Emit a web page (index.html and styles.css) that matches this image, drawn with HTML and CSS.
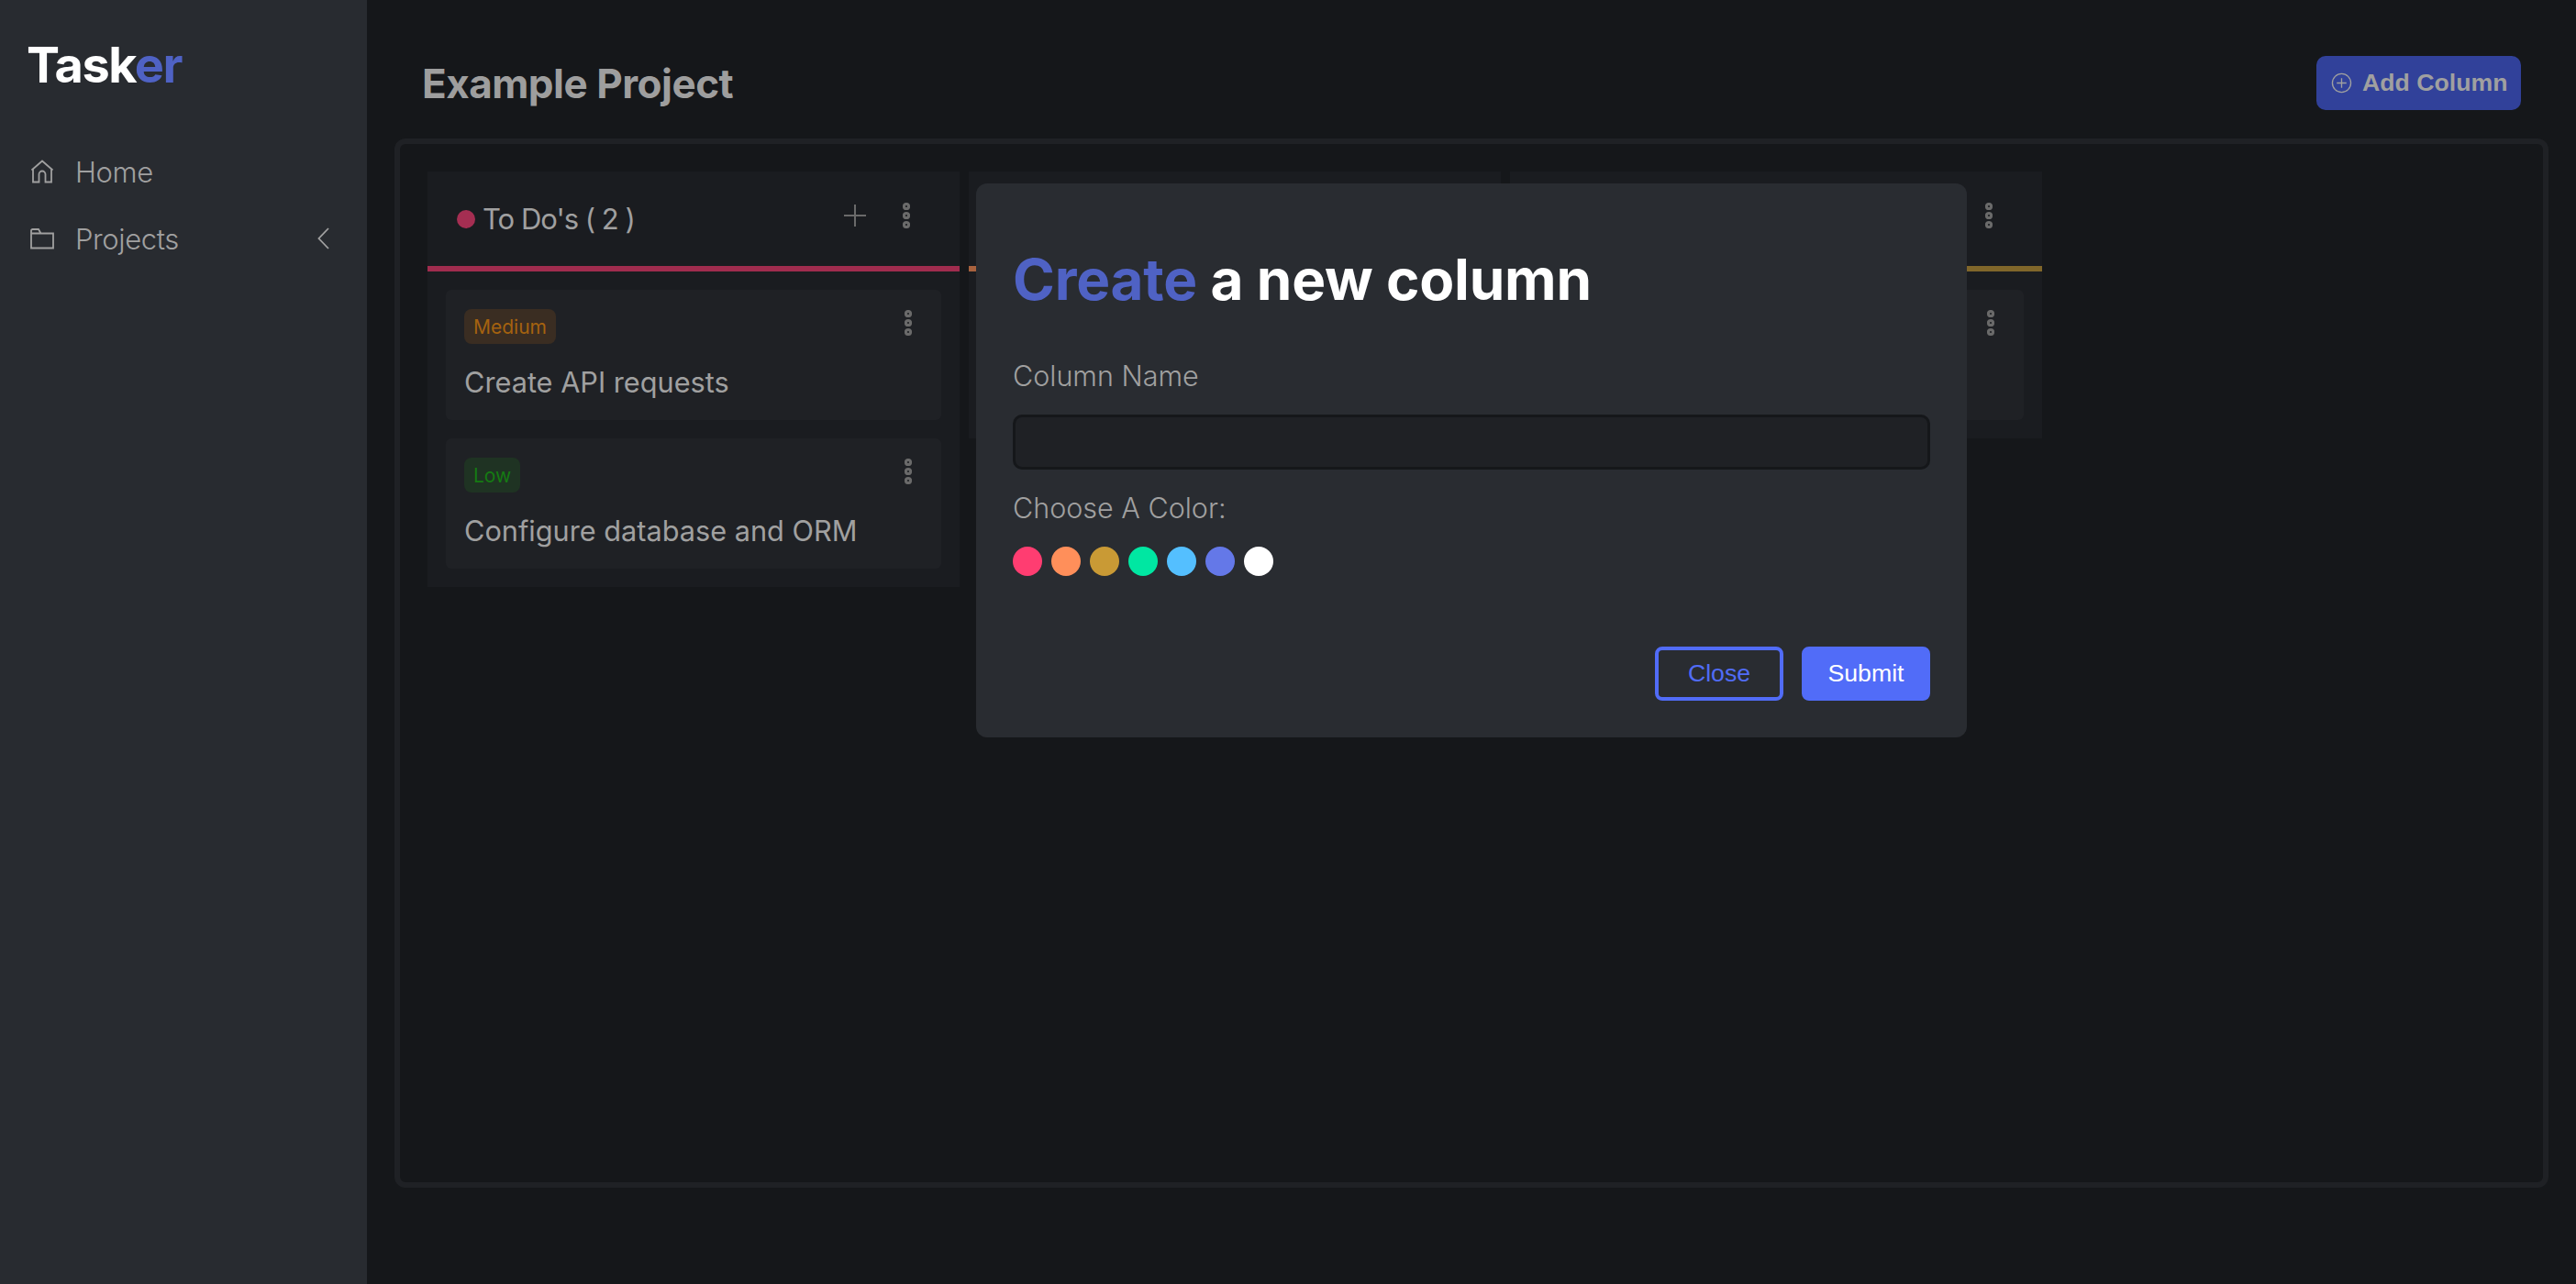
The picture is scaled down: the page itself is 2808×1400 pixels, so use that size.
FILE: index.html
```html
<!DOCTYPE html>
<html lang="en">
<head>
    <meta charset="UTF-8">
    <meta name="viewport" content="width=device-width, initial-scale=1.0">
    <title>Tasker</title>
    <link rel="stylesheet" href="styles.css">
</head>
<body>
    <aside class="sidebar">
        <h1 class="logo">Task<span class="accent">er</span></h1>
        <nav class="nav">
            <a class="nav-item">
                <svg class="nav-icon" viewBox="0 0 26 26"><path d="M1.5 11.5 13 1.5l11.5 10M3 10.5V24.5h6.5V16a3.5 3.5 0 0 1 7 0v8.5H23V10.5"/></svg>
                <span>Home</span>
            </a>
            <a class="nav-item">
                <svg class="nav-icon" viewBox="0 0 26 24"><path d="M1 3.5V22.5H25V6.5H11.5L9 2H2.5A1.5 1.5 0 0 0 1 3.5ZM1 6.5H11.5"/></svg>
                <span>Projects</span>
                <svg class="nav-arrow" viewBox="0 0 13 24"><path d="M12 1 1.5 12 12 23"/></svg>
            </a>
        </nav>
    </aside>

    <main class="main">
        <header class="topbar">
            <h2 class="project-title">Example Project</h2>
            <button class="add-btn">
                <svg class="add-icon" viewBox="0 0 24 24"><circle cx="12" cy="12" r="10.5"/><path d="M12 6.5v11M6.5 12h11"/></svg>
                Add Column
            </button>
        </header>

        <section class="board">
            <div class="column">
                <div class="column-head line-red">
                    <span class="column-dot"></span>
                    <span class="column-name">To Do's ( 2 )</span>
                    <div class="column-actions">
                        <svg class="plus" viewBox="0 0 24 24"><path d="M12 0v24M0 12h24"/></svg>
                        <svg class="dots" viewBox="0 0 8 28"><circle cx="4" cy="4" r="2.6"/><circle cx="4" cy="14" r="2.6"/><circle cx="4" cy="24" r="2.6"/></svg>
                    </div>
                </div>
                <div class="cards">
                    <article class="card">
                        <div class="card-head">
                            <span class="badge badge-medium">Medium</span>
                            <svg class="dots" viewBox="0 0 8 28"><circle cx="4" cy="4" r="2.6"/><circle cx="4" cy="14" r="2.6"/><circle cx="4" cy="24" r="2.6"/></svg>
                        </div>
                        <p class="card-title">Create API requests</p>
                    </article>
                    <article class="card">
                        <div class="card-head">
                            <span class="badge badge-low">Low</span>
                            <svg class="dots" viewBox="0 0 8 28"><circle cx="4" cy="4" r="2.6"/><circle cx="4" cy="14" r="2.6"/><circle cx="4" cy="24" r="2.6"/></svg>
                        </div>
                        <p class="card-title">Configure database and ORM</p>
                    </article>
                </div>
            </div>

            <div class="column">
                <div class="column-head line-orange"></div>
                <div class="cards">
                    <article class="card"></article>
                </div>
            </div>

            <div class="column">
                <div class="column-head line-yellow">
                    <div class="column-actions">
                        <svg class="dots" viewBox="0 0 8 28"><circle cx="4" cy="4" r="2.6"/><circle cx="4" cy="14" r="2.6"/><circle cx="4" cy="24" r="2.6"/></svg>
                    </div>
                </div>
                <div class="cards">
                    <article class="card">
                        <div class="card-head">
                            <span></span>
                            <svg class="dots" viewBox="0 0 8 28"><circle cx="4" cy="4" r="2.6"/><circle cx="4" cy="14" r="2.6"/><circle cx="4" cy="24" r="2.6"/></svg>
                        </div>
                    </article>
                </div>
            </div>
        </section>

        <form class="modal" onsubmit="event.preventDefault();">
            <h2 class="modal-title"><span class="accent">Create</span> a new column</h2>
            <label class="field-label" for="column-name">Column Name</label>
            <input class="field-input" type="text" id="column-name">
            <p class="field-label color-label">Choose A Color:</p>
            <div class="swatches">
                <span class="swatch swatch-pink"></span>
                <span class="swatch swatch-orange"></span>
                <span class="swatch swatch-gold"></span>
                <span class="swatch swatch-green"></span>
                <span class="swatch swatch-sky"></span>
                <span class="swatch swatch-blue"></span>
                <span class="swatch swatch-white"></span>
            </div>
            <div class="modal-actions">
                <button type="button" class="btn btn-outline">Close</button>
                <button type="submit" class="btn btn-solid">Submit</button>
            </div>
        </form>
    </main>
</body>
</html>
```

FILE: styles.css
```css
* { box-sizing: border-box; }
html, body { height: 100%; }
body { margin: 0; display: flex; min-height: 1400px; background: #15171a; font-family: Inter, "Liberation Sans", sans-serif; color: #a0a0a0; }
h1, h2, p { margin: 0; }

.accent { color: #4f62c4; }

/* sidebar */
.sidebar { width: 400px; flex: none; background: #282b30; padding: 37px 30px 36px 29px; }
.logo { font-size: 54px; line-height: 68px; font-weight: 700; color: #fff; letter-spacing: -1.5px; }
.nav { margin-top: 62px; display: flex; flex-direction: column; gap: 33px; }
.nav-item { display: flex; align-items: center; height: 40px; font-size: 31px; font-weight: 300; letter-spacing: -0.4px; }
.nav-icon { width: 26px; height: 26px; margin-left: 4px; margin-right: 23px; fill: none; stroke: #a0a0a0; stroke-width: 1.8; }
.nav-arrow { width: 13px; height: 24px; margin-left: auto; margin-right: 11px; fill: none; stroke: #a0a0a0; stroke-width: 1.8; }

/* top of main area */
.main { flex: 1; position: relative; min-width: 0; }
.topbar { height: 151px; padding: 61px 60px 0 30px; display: flex; justify-content: space-between; align-items: flex-start; }
.project-title { margin-left: 30px; font-size: 44px; line-height: 60px; font-weight: 700; color: #9e9e9e; letter-spacing: -0.5px; }
.add-btn { width: 223px; height: 59px; display: flex; align-items: center; gap: 11px; padding: 0 0 0 16px; border: 0; border-radius: 10px; background: #31419a; color: #a0a0a0; font-family: "Liberation Sans", Arial, sans-serif; font-size: 26.67px; font-weight: 700; }
.add-icon { width: 23px; height: 23px; fill: none; stroke: #a0a0a0; stroke-width: 1.4; }

/* board */
.board { margin: 0 30px; height: 1144px; padding: 30px; display: flex; align-items: flex-start; gap: 10px; border: 6px solid #1f2125; border-radius: 12px; }
.column { width: 580px; background: #1a1c20; }
.column-head { height: 109px; padding: 0 54px 0 32px; display: flex; align-items: center; border-bottom: 6px solid; }
.line-red { border-color: #a02c4e; }
.line-orange { border-color: #a8623e; }
.line-yellow { border-color: #80662a; }
.column-dot { width: 20px; height: 20px; border-radius: 50%; background: #a52e52; margin-right: 8px; }
.column-name { font-size: 31px; line-height: 40px; letter-spacing: -1px; }
.column-actions { margin-left: auto; margin-bottom: 8px; display: flex; align-items: center; gap: 40px; }
.plus { width: 24px; height: 24px; fill: none; stroke: #6a6a6a; stroke-width: 2; }
.dots { width: 8px; height: 28px; flex: none; fill: none; stroke: #6a6a6a; stroke-width: 3; }

.cards { padding: 20px; display: flex; flex-direction: column; gap: 20px; }
.card { height: 142px; padding: 21px 32px 0 20px; background: #1f2125; border-radius: 6px; }
.card-head { display: flex; justify-content: space-between; align-items: flex-start; }
.card-head .dots { margin-top: 1px; }
.card-title { margin-top: 22px; font-size: 30.7px; line-height: 40px; }
.badge { height: 38px; padding: 0 10px; display: flex; align-items: center; border-radius: 8px; font-size: 21px; }
.badge-medium { background: #3a2d22; color: #a5620f; }
.badge-low { background: #1f3323; color: #157a12; }

/* new column dialog */
.modal { position: absolute; top: 200px; left: 50%; width: 1080px; height: 604px; margin-left: -540px; padding: 65px 40px 40px; background: #292c31; border-radius: 12px; }
.modal-title { font-size: 62px; line-height: 80px; font-weight: 700; color: #fff; letter-spacing: -0.2px; }
.field-label { display: block; font-size: 30.5px; line-height: 40px; font-weight: 300; }
.modal-title + .field-label { margin-top: 45px; }
.field-input { display: block; width: 100%; height: 60px; margin-top: 22px; background: #1f2125; border: 3px solid #15171a; border-radius: 10px; }
.color-label { margin-top: 22px; }
.swatches { margin-top: 22px; display: flex; gap: 10px; }
.swatch { width: 32px; height: 32px; border-radius: 50%; }
.swatch-pink { background: #ff3d71; }
.swatch-orange { background: #ff8f5a; }
.swatch-gold { background: #c99a35; }
.swatch-green { background: #00e7a2; }
.swatch-sky { background: #54bfff; }
.swatch-blue { background: #6478e8; }
.swatch-white { background: #fff; }
.modal-actions { margin-top: 77px; display: flex; justify-content: flex-end; gap: 20px; }
.btn { width: 140px; height: 59px; border-radius: 8px; border: 4px solid #516cf8; font-family: "Liberation Sans", Arial, sans-serif; font-size: 26.67px; }
.btn-outline { background: transparent; color: #516cf8; }
.btn-solid { background: #516cf8; color: #fff; }
```
